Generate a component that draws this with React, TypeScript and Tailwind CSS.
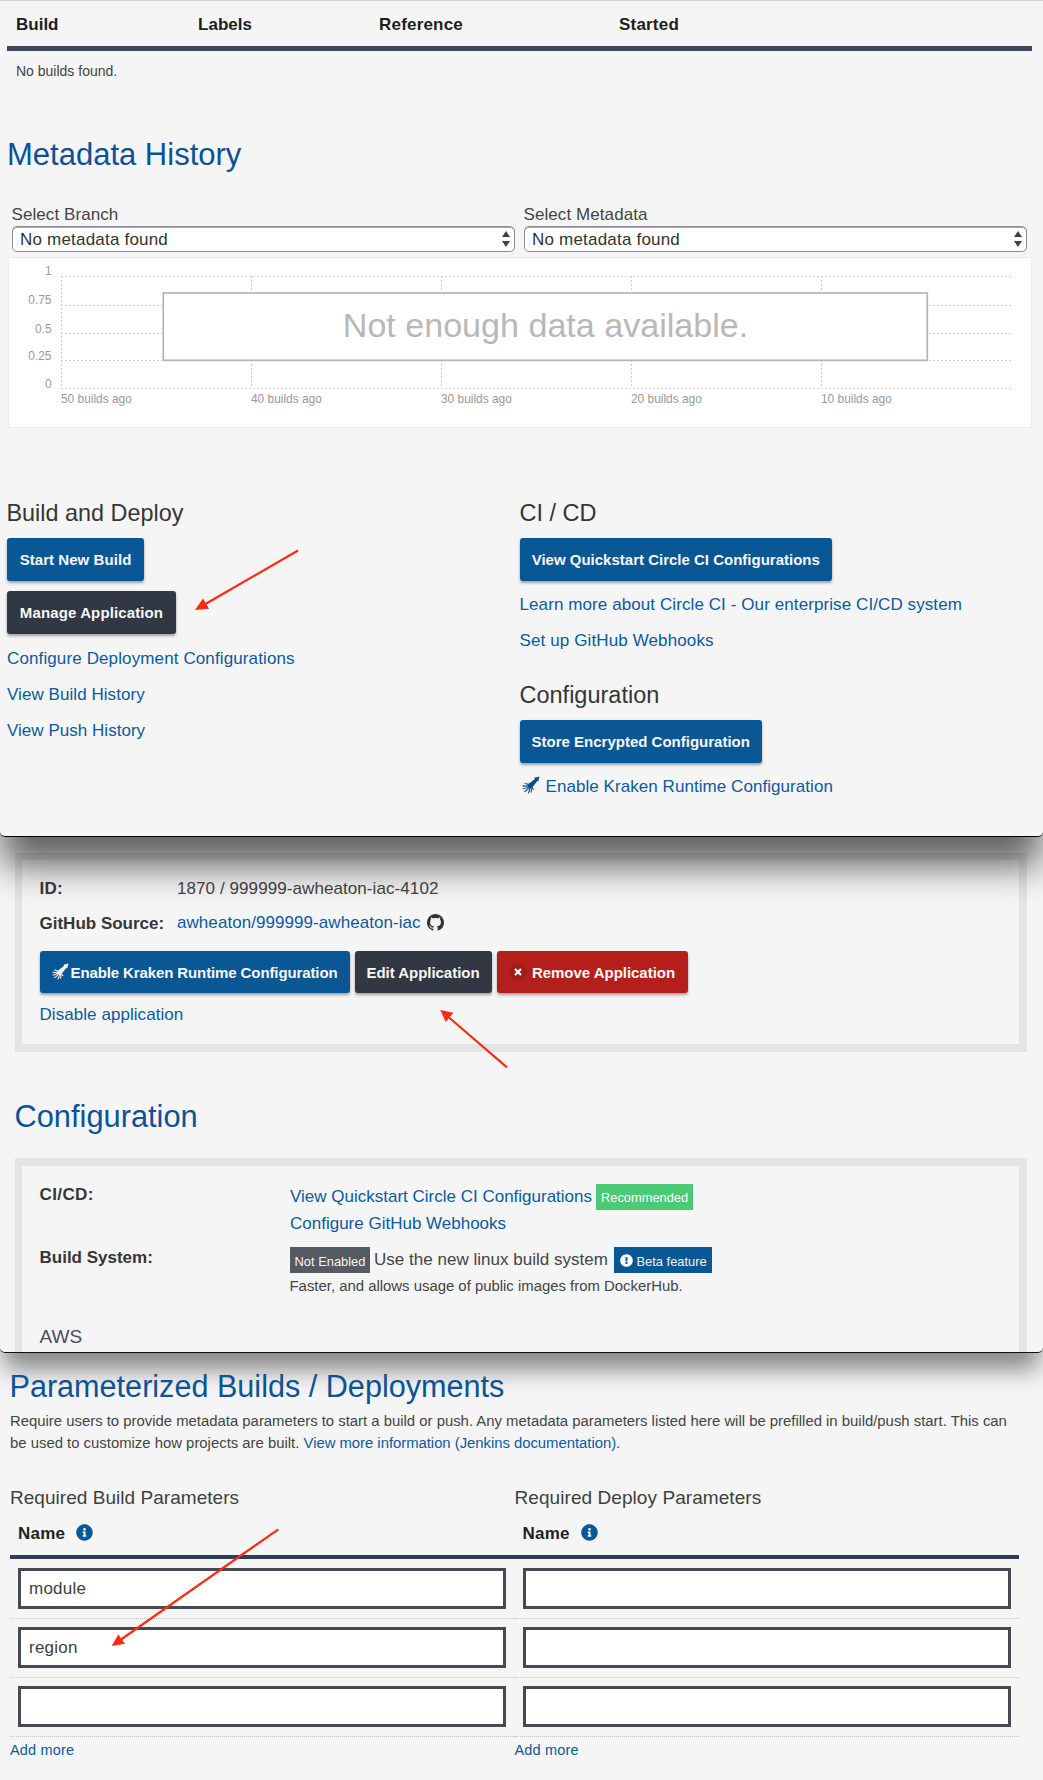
import type { ReactNode } from "react";
import { BsGithub } from "react-icons/bs";
import { FaExclamationCircle, FaInfoCircle } from "react-icons/fa";

function Kraken({ className }: { className: string }) {
  return (
    <svg viewBox="0 0 24 24" className={className} fill="currentColor">
      <path d="M23.200.8 21.600 7.400 20.400 6.600 14.200 14.600C12.800 16.400 10.600 16.800 9 15.600 7.400 14.200 7.400 12 9 10.400L17.200 4 16.200 2.400z" />
      <g fill="none" stroke="currentColor" strokeWidth="1.500" strokeLinecap="round">
        <path d="M10 11.500C8 10.600 6 11.200 4 9.800" />
        <path d="M9.500 13C7 12.600 4.500 14 1.200 13.200" />
        <path d="M9.500 13.800C7 14.500 5 17 1.500 17" />
        <path d="M10 14.500C8 16.500 7 19 3.800 20.600" />
        <path d="M11 15C10 17.500 10.200 20 8.400 22.600" />
        <path d="M12 14.500C12 17 13 18.500 12.200 21.500" />
        <path d="M12.500 14.500C13.800 15.500 14 17 15.500 17.800" />
      </g>
    </svg>
  );
}

function Button({ className, children }: { className: string; children: ReactNode }) {
  return (
    <button
      className={`flex items-center justify-center whitespace-nowrap rounded-[3px] text-[15px] font-bold leading-[17px] text-[#f7f7f7] shadow-[0_2px_3px_rgba(0,0,0,0.35)] ${className}`}
    >
      {children}
    </button>
  );
}

function Link({ className = "", children }: { className?: string; children: ReactNode }) {
  return (
    <a href="#" className={`block whitespace-nowrap text-[17px] leading-[19px] text-[#0c5a9f] ${className}`}>
      {children}
    </a>
  );
}

function SelectField({ label }: { label: string }) {
  return (
    <div className="w-[503px]">
      <div className="-ml-[0.500px] text-[17px] leading-[19px] tracking-[0.08px]">{label}</div>
      <div className="mt-0.5 flex h-[26px] items-center justify-between rounded-[5px] border border-[#8b8b95] bg-white pl-[7px] pr-1 shadow-[inset_0_1px_0_#a9a9b2]">
        <span className="text-[17px] leading-[19px] tracking-[0.2px] text-[#333]">No metadata found</span>
        <svg viewBox="0 0 8 16" className="h-4 w-2 fill-[#404040]">
          <path d="M4 0 8 6H0zM4 16 0 10h8z" />
        </svg>
      </div>
    </div>
  );
}

const yTicks = [
  { label: "1", y: 19.5, text: 18 },
  { label: "0.75", y: 48.5, text: 47 },
  { label: "0.5", y: 76.5, text: 75.5 },
  { label: "0.25", y: 103.5, text: 102.5 },
  { label: "0", y: 131.5, text: 130.5 },
];
const xTicks = [
  { label: "50 builds ago", x: 53.5 },
  { label: "40 builds ago", x: 243.5 },
  { label: "30 builds ago", x: 433.5 },
  { label: "20 builds ago", x: 623.5 },
  { label: "10 builds ago", x: 813.5 },
];

function HistoryChart() {
  return (
    <div className="ml-2 mt-[5px] h-[171px] w-[1024px] border border-[#ebebeb] bg-white">
      <svg width="1022" height="169" viewBox="1 1 1022 169" className="block">
        <g stroke="#cfcfcf" strokeWidth="1" strokeDasharray="2 2">
          {yTicks.map((t) => (
            <line key={t.label} x1="53" x2="1003" y1={t.y} y2={t.y} />
          ))}
          {xTicks.map((t) => (
            <line key={t.label} x1={t.x} x2={t.x} y1="19" y2="131" />
          ))}
        </g>
        <g fill="#999" fontSize="11.9">
          {yTicks.map((t) => (
            <text key={t.label} x="43.5" y={t.text} textAnchor="end">
              {t.label}
            </text>
          ))}
          {xTicks.map((t) => (
            <text key={t.label} x={t.x - 0.5} y="146">
              {t.label}
            </text>
          ))}
        </g>
        <rect x="155.300" y="36" width="764" height="67.300" fill="#fff" stroke="#b5b5b5" strokeWidth="1.700" />
        <text x="537.500" y="80" textAnchor="middle" fontSize="34.100" fill="#b8b8b8">
          Not enough data available.
        </text>
      </svg>
    </div>
  );
}

function Row({ label, labelClass, children }: { label: string; labelClass: string; children: ReactNode }) {
  return (
    <div className="flex">
      <div className={`shrink-0 text-[17px] font-bold leading-[19px] text-[#363636] ${labelClass}`}>{label}</div>
      <div>{children}</div>
    </div>
  );
}

function ParamColumn({
  title,
  titleClass,
  rowClass,
  values,
}: {
  title: string;
  titleClass: string;
  rowClass: string;
  values: string[];
}) {
  return (
    <div className="w-[504.500px] text-[#404040]">
      <h3 className={`text-[19px] leading-[21px] ${titleClass}`}>{title}</h3>
      <div className="mt-4 flex h-[19px] items-start pl-2">
        <span className="text-[17px] font-bold leading-[19px] tracking-[0.25px] text-[#222]">Name</span>
        <FaInfoCircle className="ml-[11px] h-[17px] w-[17px] text-[#0b5797]" />
      </div>
      <div className="mb-px mt-3 h-1 bg-[#2e3c55]" />
      {values.map((v, i) => (
        <div key={i} className={`border-b border-dotted border-[#c4c4c4] pb-[9px] pl-2 pt-2 ${rowClass}`}>
          <div className="flex h-[41px] items-center border-[3px] border-[#454a52] bg-white pl-2 text-[17px] leading-[19px] tracking-[0.22px]">
            {v}
          </div>
        </div>
      ))}
      <a href="#" className="mt-[5px] block text-[14.500px] leading-4 tracking-[0.17px] text-[#0c5a9f]">
        Add more
      </a>
    </div>
  );
}

export default function App() {
  return (
    <div className="relative h-[1780px] w-[1043px] overflow-hidden bg-[#f5f5f5] font-['Liberation_Sans',Arial,sans-serif] text-[#444]">
      {/* Build overview */}
      <section className="relative z-20 h-[837px] rounded-b-[5px] border-b border-t border-b-black border-t-[#d2d2d2] bg-[#f5f5f5] shadow-[0_31px_36px_-2px_rgba(0,0,0,0.6)]">
        <div className="ml-[7px] flex h-[50px] w-[1025px] border-b-[5px] border-[#3d485c] pl-[9px] pt-[14px] text-[17px] font-bold leading-[19px] text-[#1f1f1f]">
          <div className="w-[182px]">Build</div>
          <div className="w-[181px] tracking-[0.02px]">Labels</div>
          <div className="w-[240px] tracking-[0.2px]">Reference</div>
          <div className="tracking-[0.2px]">Started</div>
        </div>
        <div className="ml-4 mt-3 text-[14px] leading-4">No builds found.</div>
        <h2 className="ml-[7px] mt-[58px] text-[31px] leading-[35px] text-[#0b5297]">Metadata History</h2>
        <div className="ml-3 mt-[33px] flex gap-[9px]">
          <SelectField label="Select Branch" />
          <SelectField label="Select Metadata" />
        </div>
        <HistoryChart />
        <div className="ml-[7px] mt-[72px] flex">
          <div className="w-[512.500px]">
            <h3 className="-ml-[0.500px] text-[23.400px] leading-[26px] text-[#363636]">Build and Deploy</h3>
            <Button className="mt-3 h-[43px] w-[137px] bg-[#0a5796] tracking-[0.06px]">Start New Build</Button>
            <Button className="mt-2.5 h-[43px] w-[169px] bg-[#313743] tracking-[0.12px]">Manage Application</Button>
            <Link className="mt-[15px] tracking-[0.12px]">Configure Deployment Configurations</Link>
            <Link className="mt-[17px] tracking-[0.06px]">View Build History</Link>
            <Link className="mt-[17px] tracking-[0.03px]">View Push History</Link>
          </div>
          <div>
            <h3 className="text-[23.500px] leading-[26px] text-[#363636]">CI / CD</h3>
            <Button className="mt-3 h-[43px] w-[312.500px] bg-[#0a5796]">View Quickstart Circle CI Configurations</Button>
            <Link className="mt-[14px] tracking-[0.09px]">
              Learn more about Circle CI - Our enterprise CI/CD system
            </Link>
            <Link className="mt-[17px] tracking-[0.12px]">Set up GitHub Webhooks</Link>
            <h3 className="mt-8 text-[23.500px] leading-[26px] text-[#363636]">Configuration</h3>
            <Button className="mt-3 h-[43px] w-[242.500px] bg-[#0a5796]">Store Encrypted Configuration</Button>
            <div className="mt-[14px] flex">
              <Kraken className="-mt-px ml-[2px] h-[18px] w-[18px] text-[#0a4f8c]" />
              <Link className="ml-[6px] tracking-[0.06px]">Enable Kraken Runtime Configuration</Link>
            </div>
          </div>
        </div>
      </section>

      {/* Application details */}
      <section className="relative z-10 h-[516px] overflow-visible rounded-b-[5px] border-b border-[#111] bg-[#f5f5f5] pt-4 shadow-[0_20px_24px_-4px_rgba(0,0,0,0.46)]">
        <div className="ml-[15px] h-[199px] w-[1012px] border-[7px] border-b-8 border-r-8 border-[#e4e4e4] pl-[17.500px] pt-[19px]">
          <Row label="ID:" labelClass="w-[137.500px] tracking-[0.200px]">
            <div className="text-[17px] leading-[19px] tracking-[0.08px]">1870 / 999999-awheaton-iac-4102</div>
          </Row>
          <div className="mt-[15px] flex">
            <div className="w-[137.500px] pt-px text-[17px] font-bold leading-[19px] text-[#363636]">
              GitHub Source:
            </div>
            <Link className="tracking-[0.06px]">awheaton/999999-awheaton-iac</Link>
            <BsGithub className="ml-[6.500px] mt-px h-[17px] w-[17px] text-[#333]" />
          </div>
          <div className="mt-[18px] flex gap-[5px]">
            <Button className="h-[42px] w-[310px] bg-[#0a5796] tracking-[-0.110px]">
              <Kraken className="-mt-0.5 ml-px mr-px h-[17px] w-[17px]" />
              Enable Kraken Runtime Configuration
            </Button>
            <Button className="h-[42px] w-[137px] bg-[#313743] tracking-[-0.03px]">Edit Application</Button>
            <Button className="h-[42px] w-[191px] bg-[#b51f1b] tracking-[-0.03px]">
              <span className="mr-[5px] flex h-[18px] w-[18px] items-center justify-center rounded-full bg-[#9f1d1b]">
                <svg viewBox="0 0 8 8" className="h-2 w-2" stroke="white" strokeWidth="2.200">
                  <path d="M1 1 7 7M7 1 1 7" />
                </svg>
              </span>
              Remove Application
            </Button>
          </div>
          <Link className="mt-3 tracking-[0.06px]">Disable application</Link>
        </div>

        <h2 className="ml-[14.500px] mt-[47px] text-[30.800px] leading-[35px] text-[#0b5297]">Configuration</h2>
        <div className="ml-[15px] mt-6 h-[194px] w-[1012px] border-x-[7px] border-r-8 border-t-8 border-[#e4e4e4] pl-[17.500px] pt-[18px]">
          <div className="h-[63px]">
            <Row label="CI/CD:" labelClass="w-[250.500px] pt-px tracking-[0.400px]">
              <div className="flex h-[26px]">
                <Link className="pt-[3px]">View Quickstart Circle CI Configurations</Link>
                <span className="ml-1 h-[26px] bg-[#4bc974] px-[5px] pt-[6px] text-[12.850px] leading-[15px] text-white">
                  Recommended
                </span>
              </div>
              <Link className="mt-1">Configure GitHub Webhooks</Link>
            </Row>
          </div>
          <Row label="Build System:" labelClass="w-[250px] pt-px">
            <div className="flex h-[26px] whitespace-nowrap">
              <span className="h-[26px] w-20 bg-[#565a62] pl-[5px] pt-[7px] text-[12.900px] leading-[15px] text-[#f5f5f5]">
                Not Enabled
              </span>
              <span className="ml-[4.500px] pt-[3px] text-[17px] leading-[19px] tracking-[0.02px]">
                Use the new linux build system
              </span>
              <span className="ml-[5.500px] flex h-[26px] w-[98px] bg-[#0a5796] pl-[6px] text-[12.900px] leading-[15px] text-[#f5f5f5]">
                <FaExclamationCircle className="mt-[6.500px] h-[13px] w-[13px] text-white" />
                <span className="ml-[4px] pt-[7px]">Beta feature</span>
              </span>
            </div>
            <div className="mt-[5px] text-[14.900px] leading-4">Faster, and allows usage of public images from DockerHub.</div>
          </Row>
          <h4 className="mt-8 text-[19px] leading-[21px] text-[#4a4f5a]">AWS</h4>
        </div>
      </section>

      {/* Required parameters */}
      <section className="ml-[10px] pt-4">
        <h2 className="relative z-10 -ml-[0.500px] text-[30.600px] leading-[35px] text-[#0b5297]">
          Parameterized Builds / Deployments
        </h2>
        <p className="mt-1.5 whitespace-nowrap text-[14.880px] leading-[22px]">
          Require users to provide metadata parameters to start a build or push. Any metadata parameters listed here will
          be prefilled in build/push start. This can
          <br />
          <span>be used to customize how projects are built. </span>
          <a href="#" className="tracking-[-0.03px] text-[#0c5a9f]">
            View more information (Jenkins documentation)
          </a>
          .
        </p>
        <div className="mt-[33px] flex">
          <ParamColumn
            title="Required Build Parameters"
            titleClass="tracking-[0.04px]"
            rowClass="pr-[8.500px]"
            values={["module", "region", ""]}
          />
          <ParamColumn
            title="Required Deploy Parameters"
            titleClass="tracking-[0.07px]"
            rowClass="pr-2"
            values={["", "", ""]}
          />
        </div>
      </section>

      {/* Annotation arrows */}
      <svg
        viewBox="0 0 1043 1780"
        className="pointer-events-none absolute inset-0 z-30 h-full w-full"
        fill="#ff2a12"
        stroke="#ff2a12"
        strokeWidth="2.200"
      >
        <path d="M298 550.500 205 604.200M507 1067.300 449 1017.500M278.300 1529.300 121 1639.500" />
        <path stroke="none" d="M195 610l8-11.500 6 10.200zM440.300 1010l13 2.700-7.600 9.300zM111.700 1646l6.600-11.500 6.700 9.200z" />
      </svg>
    </div>
  );
}
